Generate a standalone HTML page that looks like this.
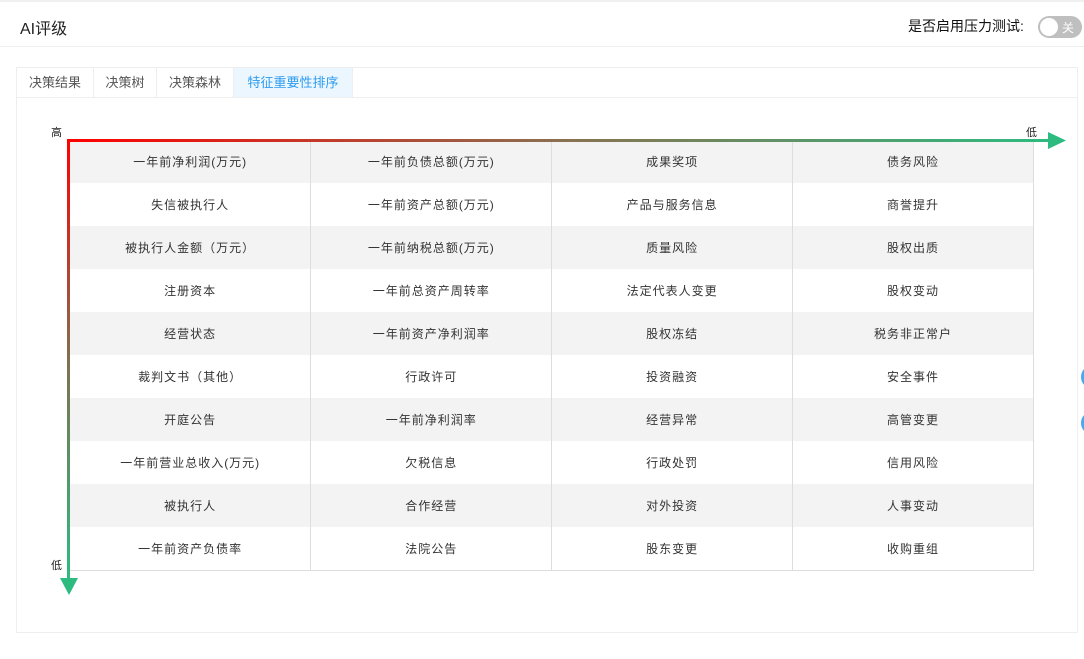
<!DOCTYPE html>
<html><head><meta charset="utf-8"><style>
*{margin:0;padding:0;box-sizing:border-box}
body{width:1084px;height:659px;background:#fff;font-family:"Liberation Sans","Noto Sans CJK SC",sans-serif;position:relative;overflow:hidden}
.top{position:absolute;left:0;top:0;width:1084px;height:2px;background:#f0f0f0}
.hdr{position:absolute;left:0;top:2px;width:1084px;height:45px;border-bottom:1px solid #eee}
.title{position:absolute;left:20px;top:13px;font-size:16px;color:#222}
.st{position:absolute;left:908px;top:14px;font-size:14px;color:#111}
.sw{position:absolute;left:1038px;top:14px;width:44px;height:22px;border-radius:11px;background:#bfbfbf}
.sw .k{position:absolute;left:2px;top:2px;width:18px;height:18px;border-radius:50%;background:#fff}
.sw span{position:absolute;left:24px;top:3px;font-size:12px;color:#fff}
.panel{position:absolute;left:16px;top:67px;width:1062px;height:566px;border:1px solid #eee}
.tabs{position:absolute;left:0;top:0;height:30px;width:1060px;border-bottom:1px solid #eee}
.tab{position:absolute;top:0;height:29px;line-height:29px;font-size:13px;color:#555;text-align:center;border-right:1px solid #eee}
.tab.a{background:#ecf6ff;color:#2d9cf0}
table{position:absolute;left:70px;top:140px;width:964px;border-collapse:collapse;table-layout:fixed}
td{height:43px;text-align:center;font-size:12px;color:#333;letter-spacing:1px;border-right:1px solid #ddd}
tr:nth-child(odd) td{background:#f3f3f3}
tr:last-child td{border-bottom:1px solid #ddd}
.lbl{position:absolute;font-size:11px;color:#222}
.c{position:absolute;width:24px;height:24px;border-radius:50%;background:#4aa8f0}
</style></head><body>
<div class="top"></div>
<div class="hdr"><div class="title">AI评级</div><div class="st">是否启用压力测试:</div><div class="sw"><div class="k"></div><span>关</span></div></div>
<div class="panel"><div class="tabs">
<div class="tab" style="left:0;width:77px">决策结果</div>
<div class="tab" style="left:77px;width:63px">决策树</div>
<div class="tab" style="left:140px;width:77px">决策森林</div>
<div class="tab a" style="left:217px;width:119px">特征重要性排序</div>
</div></div>
<table>
<tr><td>一年前净利润(万元)</td><td>一年前负债总额(万元)</td><td>成果奖项</td><td>债务风险</td></tr>
<tr><td>失信被执行人</td><td>一年前资产总额(万元)</td><td>产品与服务信息</td><td>商誉提升</td></tr>
<tr><td>被执行人金额（万元）</td><td>一年前纳税总额(万元)</td><td>质量风险</td><td>股权出质</td></tr>
<tr><td>注册资本</td><td>一年前总资产周转率</td><td>法定代表人变更</td><td>股权变动</td></tr>
<tr><td>经营状态</td><td>一年前资产净利润率</td><td>股权冻结</td><td>税务非正常户</td></tr>
<tr><td>裁判文书（其他）</td><td>行政许可</td><td>投资融资</td><td>安全事件</td></tr>
<tr><td>开庭公告</td><td>一年前净利润率</td><td>经营异常</td><td>高管变更</td></tr>
<tr><td>一年前营业总收入(万元)</td><td>欠税信息</td><td>行政处罚</td><td>信用风险</td></tr>
<tr><td>被执行人</td><td>合作经营</td><td>对外投资</td><td>人事变动</td></tr>
<tr><td>一年前资产负债率</td><td>法院公告</td><td>股东变更</td><td>收购重组</td></tr>
</table>
<svg style="position:absolute;left:0;top:0" width="1084" height="659">
<defs>
<linearGradient id="h" x1="0" x2="1" y1="0" y2="0"><stop offset="0" stop-color="#f00"/><stop offset="0.5" stop-color="#8a7050"/><stop offset="1" stop-color="#2dbb80"/></linearGradient>
<linearGradient id="v" x1="0" x2="0" y1="0" y2="1"><stop offset="0" stop-color="#f00"/><stop offset="0.5" stop-color="#807050"/><stop offset="1" stop-color="#2dbb80"/></linearGradient>
</defs>
<rect x="67" y="139" width="984" height="3" fill="url(#h)"/>
<polygon points="1048,132 1066,140.5 1048,149" fill="#2dbb80"/>
<rect x="67" y="139" width="3" height="441" fill="url(#v)"/>
<polygon points="60,578 78,578 69,595" fill="#2dbb80"/>
</svg>
<div class="lbl" style="left:51px;top:124px">高</div>
<div class="lbl" style="left:1026px;top:124px">低</div>
<div class="lbl" style="left:51px;top:557px">低</div>
<div class="c" style="left:1081px;top:365px"></div>
<div class="c" style="left:1081px;top:411px"></div>
</body></html>
